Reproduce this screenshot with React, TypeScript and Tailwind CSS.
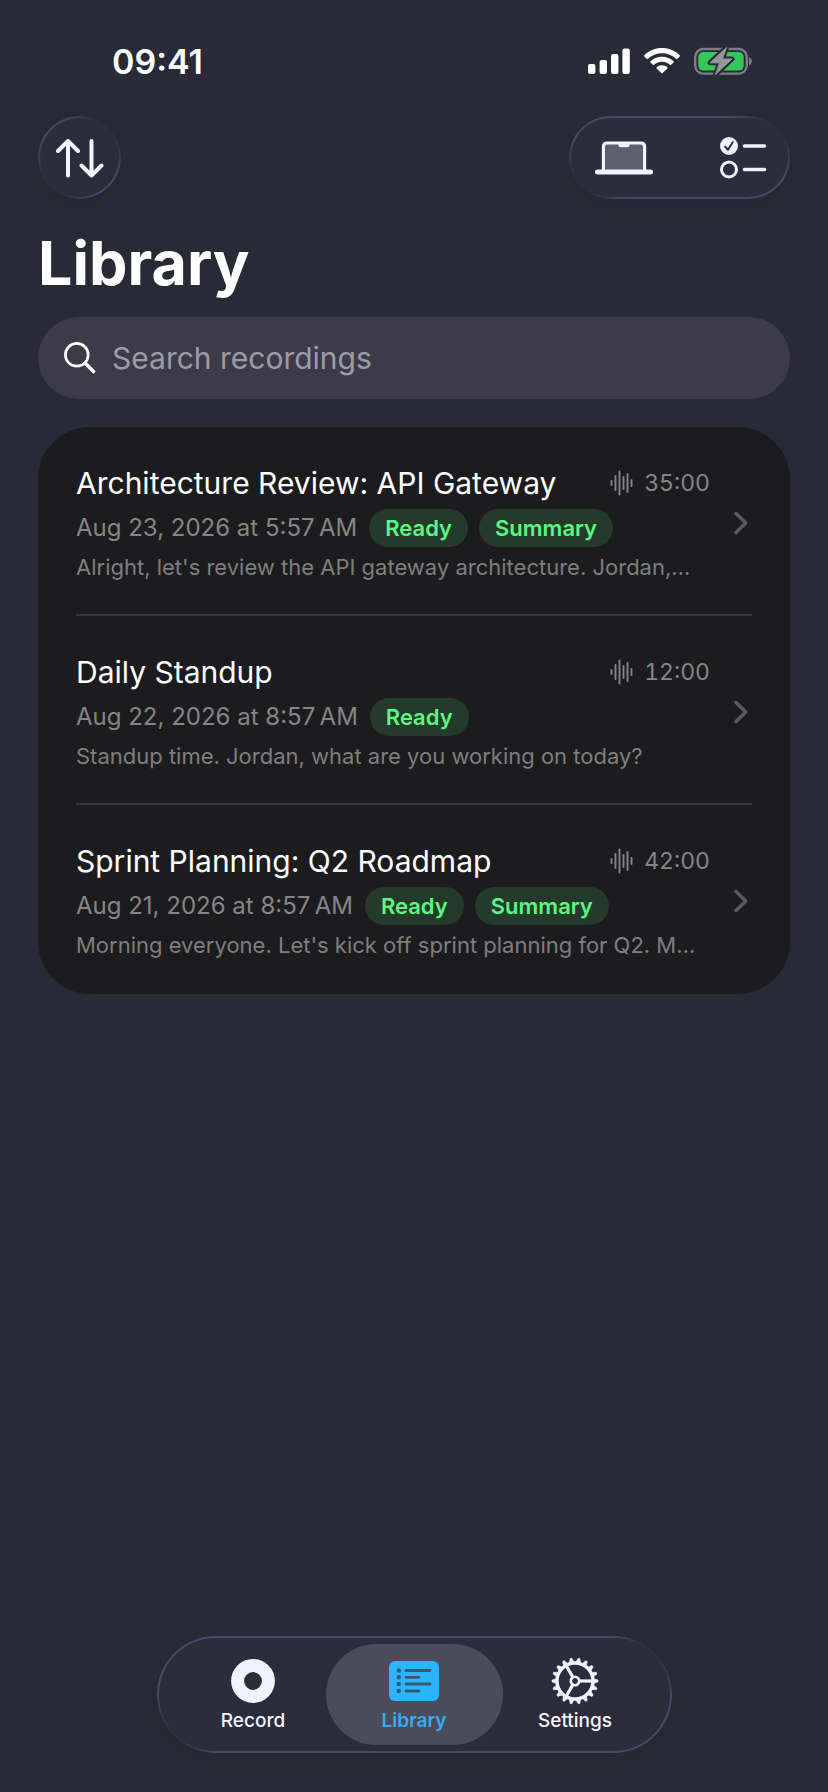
import type { ReactNode } from 'react';

interface Recording {
  title: string;
  date: string;
  duration: string;
  tags: string[];
  preview: string;
}

const recordings: Recording[] = [
  {
    title: 'Architecture Review: API Gateway',
    date: 'Aug 23, 2026 at 5:57\u202fAM',
    duration: '35:00',
    tags: ['Ready', 'Summary'],
    preview: "Alright, let's review the API gateway architecture. Jordan,…",
  },
  {
    title: 'Daily Standup',
    date: 'Aug 22, 2026 at 8:57\u202fAM',
    duration: '12:00',
    tags: ['Ready'],
    preview: 'Standup time. Jordan, what are you working on today?',
  },
  {
    title: 'Sprint Planning: Q2 Roadmap',
    date: 'Aug 21, 2026 at 8:57\u202fAM',
    duration: '42:00',
    tags: ['Ready', 'Summary'],
    preview: "Morning everyone. Let's kick off sprint planning for Q2. M…",
  },
];

function SignalIcon() {
  return (
    <svg viewBox="0 0 42 26" className="h-[26px] w-[42px] fill-white">
      <rect x="0" y="16" width="7.4" height="10" rx="2" />
      <rect x="11.6" y="12" width="7.4" height="14" rx="2" />
      <rect x="23" y="6" width="7.4" height="20" rx="2" />
      <rect x="34.4" y="0.5" width="7.4" height="25.5" rx="2" />
    </svg>
  );
}

function WifiIcon() {
  return (
    <svg viewBox="0 0 36 26" className="h-[26px] w-9 fill-white">
      <path d="M18 0C25 0 31.300 2.700 35.700 7.200C36.100 7.600 36.100 8 35.700 8.400L33.400 10.700C33 11.100 32.500 11.100 32.100 10.700C28.400 7.200 23.400 5.200 18 5.200C12.600 5.200 7.600 7.200 3.900 10.700C3.500 11.100 3 11.100 2.600 10.700L0.300 8.400C-0.100 8 -0.100 7.600 0.300 7.200C4.700 2.700 11 0 18 0Z" />
      <path d="M18 8.700C22.500 8.700 26.500 10.400 29.500 13.200C29.900 13.600 29.900 14 29.500 14.400L27.100 16.700C26.700 17.100 26.300 17.100 25.900 16.700C23.800 14.800 21 13.700 18 13.700C15 13.700 12.200 14.800 10.100 16.700C9.700 17.100 9.300 17.100 8.900 16.700L6.500 14.400C6.100 14 6.100 13.600 6.500 13.200C9.500 10.400 13.500 8.700 18 8.700Z" />
      <path d="M18 17.300C20 17.300 21.900 18 23.300 19.200C23.700 19.600 23.700 20 23.300 20.400L18.700 25C18.300 25.400 17.700 25.400 17.300 25L12.700 20.400C12.300 20 12.300 19.600 12.700 19.200C14.100 18 16 17.300 18 17.300Z" />
    </svg>
  );
}

function BatteryIcon() {
  const bolt = 'M32.500 0.500L16 15.800H25.500L21.500 27.500L38 12H28.500Z';
  return (
    <svg viewBox="0 0 58 28" className="h-7 w-[58px]">
      <rect x="1.200" y="2" width="51.600" height="24.600" rx="8" fill="none" stroke="#7c7d86" strokeWidth="2.400" />
      <rect x="4.300" y="5" width="45.400" height="18.600" rx="5" fill="#34c759" />
      <path d="M55 10C58.700 11.200 58.700 17.200 55 18.400Z" fill="#7c7d86" />
      <path d={bolt} fill="#282a35" stroke="#282a35" strokeWidth="5" strokeLinejoin="round" />
      <path d={bolt} fill="#95969b" stroke="#95969b" strokeWidth="1" strokeLinejoin="round" />
    </svg>
  );
}

function SortIcon() {
  return (
    <svg
      viewBox="0 0 48 40"
      className="h-10 w-12 fill-none stroke-[#f1f3ff]"
      strokeWidth="4"
      strokeLinecap="round"
      strokeLinejoin="round"
    >
      <path d="M12 37.500V3M2 13L12 3L22 13" />
      <path d="M35.500 3V37.500M25.500 27.500L35.500 37.500L45.500 27.500" />
    </svg>
  );
}

function LaptopIcon() {
  return (
    <svg viewBox="0 0 58 34" className="h-[34px] w-[58px]">
      <path d="M8.400 29V5.500C8.400 3.200 9.700 2 12 2H46C48.300 2 49.600 3.200 49.600 5.500V29" fill="#5f606e" stroke="#f1f3ff" strokeWidth="3.200" />
      <path d="M23.500 3H34.500V4.500C34.500 5.600 33.800 6.200 32.700 6.200H25.300C24.200 6.200 23.500 5.600 23.500 4.500Z" fill="#f1f3ff" />
      <rect x="0" y="28.600" width="58" height="5" rx="2.500" fill="#f1f3ff" />
    </svg>
  );
}

function ChecklistIcon() {
  return (
    <svg viewBox="0 0 47 42" className="h-[42px] w-[47px]" strokeLinecap="round" strokeLinejoin="round">
      <circle cx="9" cy="9" r="9" fill="#f1f3ff" />
      <path d="M5.200 9.700L8 12.700L12.700 5.200" fill="none" stroke="#2c2c3b" strokeWidth="2" />
      <circle cx="9" cy="32.500" r="7.500" fill="none" stroke="#f1f3ff" strokeWidth="3" />
      <path d="M24.500 9H44.500M24.500 32.500H44.500" stroke="#f1f3ff" strokeWidth="3.600" />
    </svg>
  );
}

function SearchIcon() {
  return (
    <svg viewBox="0 0 32 32" className="h-8 w-8 shrink-0 fill-none stroke-white" strokeLinecap="round">
      <circle cx="12.800" cy="12.800" r="11.400" strokeWidth="2.700" />
      <path d="M21.500 21.500L29.500 29.500" strokeWidth="3.600" />
    </svg>
  );
}

function WaveformIcon() {
  return (
    <svg viewBox="0 0 24 26" className="h-[26px] w-6 stroke-[#858587]" strokeWidth="1.900" strokeLinecap="round">
      <path d="M1.500 11V15M5.500 6V20M9.500 1.500V24.500M13.500 7V19M17.500 4V22M21.500 10V16" />
    </svg>
  );
}

function ChevronIcon() {
  return (
    <svg
      viewBox="0 0 14 24"
      className="h-6 w-3.5 shrink-0 fill-none stroke-[#5b5b5f]"
      strokeWidth="3.400"
      strokeLinecap="round"
      strokeLinejoin="round"
    >
      <path d="M2 2.500L11.700 12L2 21.500" />
    </svg>
  );
}

function RecordIcon() {
  return (
    <svg viewBox="0 0 46 46" className="h-[46px] w-[46px] fill-none stroke-[#f1f3ff]">
      <circle cx="23" cy="23" r="15.400" strokeWidth="13" />
    </svg>
  );
}

function LibraryIcon() {
  return (
    <svg viewBox="0 0 52 46" className="h-[46px] w-[52px]">
      <rect x="1" y="3" width="50" height="40" rx="6" fill="#29b6ff" />
      <g stroke="#3c5672" strokeWidth="2.800" strokeLinecap="round">
        <path d="M18 12.500H42M18 19.300H31M18 26H42M18 33H31" />
      </g>
      <g fill="#3c5672">
        <circle cx="10.800" cy="12.500" r="2.200" />
        <circle cx="10.800" cy="19.300" r="2.200" />
        <circle cx="10.800" cy="26" r="2.200" />
        <circle cx="10.800" cy="33" r="2.200" />
      </g>
    </svg>
  );
}

function SettingsIcon() {
  return (
    <svg viewBox="-24 -24 48 48" className="h-12 w-12 fill-none stroke-[#f1f3ff]">
      <circle r="18" strokeWidth="3.400" />
      <circle r="4.200" strokeWidth="2.600" />
      {Array.from({ length: 18 }, (_, i) => (
        <path key={i} d="M19 -2.200L23 -0.900V0.900L19 2.200Z" transform={`rotate(${i * 20})`} fill="#f1f3ff" strokeWidth="0.600" />
      ))}
      {[0, 120, 240].map((angle) => (
        <path key={angle} d="M5 0H17" transform={`rotate(${angle})`} strokeWidth="3.200" />
      ))}
    </svg>
  );
}

/* Rounded bar with a thin rim that fades out at two opposite corners */
function Glass({ children }: { children: ReactNode }) {
  return (
    <div className="rounded-full bg-[#47486a] bg-[radial-gradient(circle_at_top_right,#2d2d3c_22px,transparent_60px),radial-gradient(circle_at_bottom_left,#2d2d3c_22px,transparent_60px)] p-0.5 shadow-[0_8px_24px_rgba(0,0,0,0.06)]">
      <div className="flex rounded-full bg-[#2c2c3b]">{children}</div>
    </div>
  );
}

function RecordingRow({ recording }: { recording: Recording }) {
  return (
    <li className="border-b-2 border-[#353537] last:border-transparent">
      <a href="#recording" className="flex items-center gap-5 pt-9 pb-[31px] pr-1">
        <div className="min-w-0 flex-1">
          <div className="flex h-10 items-center justify-between">
            <h2 className="text-3xl whitespace-nowrap text-white">{recording.title}</h2>
            <div className="flex items-center gap-2.5 pr-1">
              <WaveformIcon />
              <span className="text-[23px] text-[#858587] tabular-nums">{recording.duration}</span>
            </div>
          </div>
          <div className="mt-1.5 flex h-[38px] items-center">
            <span className="mr-3 text-2xl whitespace-nowrap text-[#858587]">{recording.date}</span>
            <div className="flex gap-[11px]">
              {recording.tags.map((tag) => (
                <span
                  key={tag}
                  className="flex h-[38px] items-center rounded-full bg-[#243a2a] px-4 text-[22px] font-semibold text-[#5cf683]"
                >
                  {tag}
                </span>
              ))}
            </div>
          </div>
          <p className="mt-1 h-8 text-[22px] leading-8 whitespace-nowrap text-[#7e7e80]">{recording.preview}</p>
        </div>
        <ChevronIcon />
      </a>
    </li>
  );
}

export default function App() {
  return (
    <div className="flex min-h-screen flex-col bg-[#282a35] font-[Inter,'Liberation_Sans',sans-serif]">
      {/* Status bar */}
      <div className="flex h-[116px] items-center justify-between pt-1.5 pr-[76px] pl-28">
        <time className="text-[34px] font-semibold text-white">09:41</time>
        <div className="flex items-center gap-3.5">
          <SignalIcon />
          <WifiIcon />
          <BatteryIcon />
        </div>
      </div>

      {/* Toolbar */}
      <header className="px-[38px]">
        <div className="flex items-center justify-between">
          <Glass>
            <button aria-label="Sort" className="flex h-[79px] w-[79px] items-center justify-center">
              <SortIcon />
            </button>
          </Glass>
          <Glass>
            <button aria-label="Devices" className="flex h-[79px] items-center pr-8 pl-6">
              <LaptopIcon />
            </button>
            <button aria-label="Select recordings" className="flex h-[79px] items-center pr-[21px] pl-[35px]">
              <ChecklistIcon />
            </button>
          </Glass>
        </div>
        <h1 className="mt-6 text-[61px] leading-20 font-bold text-white">Library</h1>
      </header>

      <main className="mt-3.5 px-[38px]">
        <label className="flex h-[82px] items-center gap-4 rounded-full bg-[#3c3b47] px-[26px]">
          <SearchIcon />
          <input
            type="search"
            aria-label="Search recordings"
            placeholder="Search recordings"
            className="min-w-0 flex-1 bg-transparent text-3xl text-white outline-none placeholder:text-[#9c9ca8]"
          />
        </label>

        <ul className="mt-7 rounded-[52px] bg-[#1c1c1e] px-[38px]">
          {recordings.map((recording) => (
            <RecordingRow key={recording.title} recording={recording} />
          ))}
        </ul>
      </main>

      {/* Tab bar */}
      <nav className="mt-auto flex justify-center pt-10 pb-[39px]">
        <Glass>
          <div className="grid grid-cols-[repeat(3,161px)] px-3.5 py-1.5 text-[19px] font-medium text-[#f1f3ff]">
            <a href="#record" className="flex h-[101px] flex-col items-center justify-center gap-0.5 pt-0.5">
              <span className="flex h-12 items-center">
                <RecordIcon />
              </span>
              <span className="leading-7">Record</span>
            </a>
            <a
              href="#library"
              aria-current="page"
              className="-mx-2 flex h-[101px] flex-col items-center justify-center gap-0.5 rounded-full bg-[#4b4b5b] pt-0.5 font-semibold text-[#36aef0]"
            >
              <span className="flex h-12 items-center">
                <LibraryIcon />
              </span>
              <span className="leading-7">Library</span>
            </a>
            <a href="#settings" className="flex h-[101px] flex-col items-center justify-center gap-0.5 pt-0.5">
              <span className="flex h-12 items-center">
                <SettingsIcon />
              </span>
              <span className="leading-7">Settings</span>
            </a>
          </div>
        </Glass>
      </nav>
    </div>
  );
}
